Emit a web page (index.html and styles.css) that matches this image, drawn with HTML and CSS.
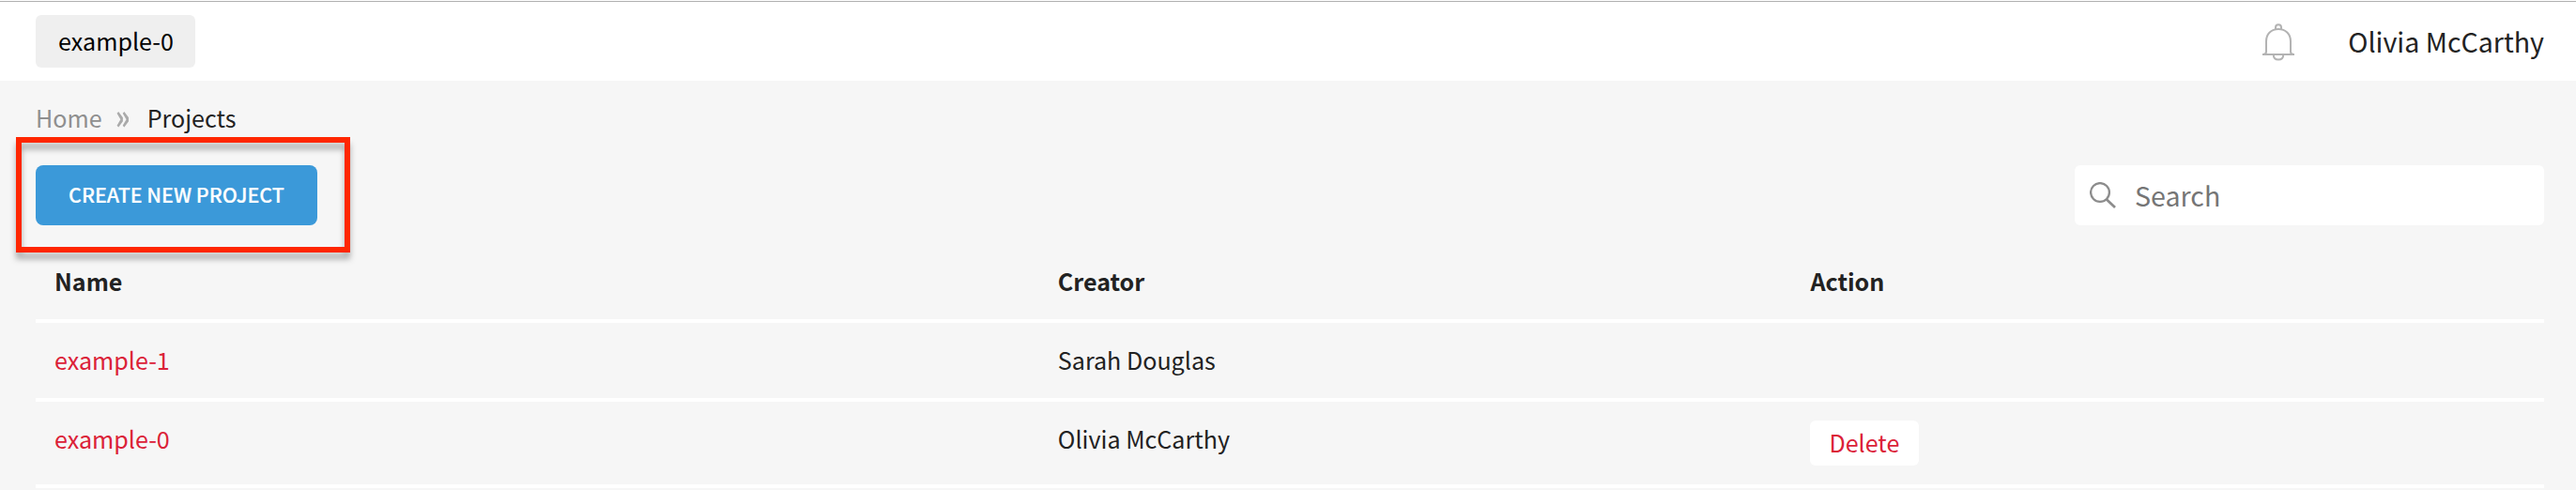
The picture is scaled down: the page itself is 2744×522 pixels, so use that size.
FILE: index.html
```html
<!DOCTYPE html>
<html lang="en">
<head>
<meta charset="utf-8">
<title>Projects</title>
<link rel="stylesheet" href="styles.css">
</head>
<body>
<header class="topbar">
  <button class="chip">example-0</button>
  <div class="account">
    <svg class="bell" width="36" height="42" viewBox="0 0 36 42" fill="none" stroke="#b3b3b3" stroke-width="2">
      <path d="M15 7V5.200a3 3 0 0 1 6 0V7"/>
      <path d="M1 34h34M2.500 33.500c1.800 0 2.500-.8 2.500-2.500V20C5 12 10.500 7 18 7s13 5 13 13v11c0 1.700.7 2.500 2.500 2.500"/>
      <path d="M12.800 34.500c0 3.200 2.200 5 5.200 5s5.200-1.800 5.200-5"/>
    </svg>
    <span class="user">Olivia McCarthy</span>
  </div>
</header>
<main class="page">
  <nav class="crumbs">
    <a class="crumb">Home</a><span class="sep">»</span><span class="current">Projects</span>
  </nav>
  <div class="toolbar">
    <div class="create-wrap">
      <button class="create">CREATE NEW PROJECT</button>
      <div class="highlight"></div>
    </div>
    <label class="search">
      <svg class="lens" width="28" height="28" viewBox="0 0 28 28" fill="none" stroke="#8c8c8c">
        <circle cx="11" cy="11" r="9.900" stroke-width="2.300"/>
        <path d="M18 18.500l9 8.500" stroke-width="2.700"/>
      </svg>
      <input class="field" type="text" placeholder="Search">
    </label>
  </div>
  <section class="table">
    <div class="row head"><span class="cell">Name</span><span class="cell">Creator</span><span class="cell">Action</span></div>
    <div class="row"><a class="cell link">example-1</a><span class="cell">Sarah Douglas</span><span class="cell"></span></div>
    <div class="row tall"><a class="cell link">example-0</a><span class="cell">Olivia McCarthy</span><span class="cell action"><button class="delete">Delete</button></span></div>
  </section>
</main>
</body>
</html>
```
FILE: styles.css
```css
* { box-sizing: border-box; }
body {
  margin: 0;
  height: 522px;
  overflow: hidden;
  background: #f6f6f6;
  color: #222;
  font-family: "Noto Sans CJK SC", "Noto Sans", sans-serif;
  font-size: 25.1px;
  line-height: 36px;
}
button, input { font: inherit; border: 0; margin: 0; padding: 0; }
.topbar {
  display: flex;
  justify-content: space-between;
  height: 86px;
  padding: 14px 34px 0 38px;
  background: linear-gradient(#fff 1px, #b0b0b0 1px, #b0b0b0 2px, #fff 2px);
}
.chip {
  width: 170px;
  height: 56px;
  margin-top: 2px;
  padding: 0 0 2px 1px;
  border-radius: 6px;
  background: #efefef;
  color: #000;
}
.account { display: flex; }
.bell { margin: 10px 56px 0 0; }
.user { font-size: 28.6px; line-height: 59px; }
.page { padding: 21px 34px 0 38px; }
.crumbs { display: flex; height: 69px; }
.crumb { color: #8f8f8f; }
.sep {
  width: 48px;
  height: 36px;
  padding-right: 4px;
  text-align: center;
  color: #aaa;
  font-size: 30px;
  font-weight: 700;
  line-height: 30px;
  transform: scale(1, 1.25);
}
.toolbar { display: flex; justify-content: space-between; height: 64px; }
.create-wrap { position: relative; }
.create {
  display: block;
  width: 300px;
  height: 64px;
  padding-bottom: 2px;
  border-radius: 8px;
  background: #3b99d9;
  color: #fff;
  font-size: 21.4px;
  font-weight: 500;
  -webkit-text-stroke: .2px #fff;
}
.highlight {
  position: absolute;
  left: -21px;
  top: -30px;
  width: 356px;
  height: 123px;
  border: 6px solid #ff2600;
  filter: drop-shadow(0 7px 3px rgba(0, 0, 0, .3));
}
.search {
  display: flex;
  align-items: flex-start;
  width: 500px;
  height: 64px;
  padding-left: 16px;
  border-radius: 6px;
  background: #fff;
}
.lens { margin: 18px 20px 0 0; flex: none; }
.field {
  flex: 1;
  min-width: 0;
  height: 63px;
  background: none;
  font-size: 28.6px;
}
.field::placeholder { color: #757575; opacity: 1; }
.table { padding-top: 20px; }
.row {
  display: grid;
  grid-template-columns: 40% 30% 30%;
  height: 84px;
  border-bottom: 4px solid #fff;
}
.cell { padding: 21px 20px 0; }
.head { font-weight: 700; }
.tall { height: 92px; }
.link { color: #db2137; }
.action { padding-top: 20px; }
.delete {
  display: block;
  width: 116px;
  height: 48px;
  padding: 0 1px 2px 0;
  border-radius: 6px;
  background: #fff;
  color: #db2137;
}
```
